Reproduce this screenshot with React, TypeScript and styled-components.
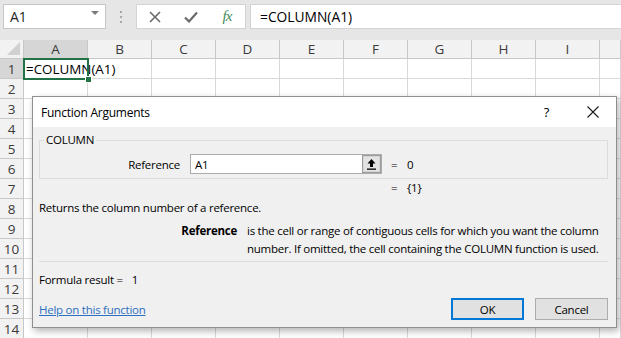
import React from 'react';
import styled, { createGlobalStyle } from 'styled-components';

const UI_FONT = `"Open Sans", "Noto Sans", "Liberation Sans", sans-serif`;

const GlobalStyle = createGlobalStyle`
  html, body {
    margin: 0;
    padding: 0;
    background: #ffffff;
    overflow: hidden;
  }
`;

const COLUMNS = ['A', 'B', 'C', 'D', 'E', 'F', 'G', 'H', 'I', ''];
const ROWS = [1, 2, 3, 4, 5, 6, 7, 8, 9, 10, 11, 12, 13, 14];

function CancelIcon() {
  return (
    <svg width="12" height="12" viewBox="0 0 12 12">
      <path d="M1 1 L11 11 M11 1 L1 11" stroke="#6a6a6a" strokeWidth="1.6" fill="none" />
    </svg>
  );
}

function EnterIcon() {
  return (
    <svg width="14" height="12" viewBox="0 0 14 12">
      <path d="M1 6.5 L5 10.5 L13 1.5" stroke="#6a6a6a" strokeWidth="2.2" fill="none" />
    </svg>
  );
}

function CloseIcon() {
  return (
    <svg width="12" height="12" viewBox="0 0 12 12">
      <path d="M0.5 0.5 L11.5 11.5 M11.5 0.5 L0.5 11.5" stroke="#1a1a1a" strokeWidth="1.1" fill="none" />
    </svg>
  );
}

function CollapseIcon() {
  return (
    <svg width="11" height="12" viewBox="0 0 11 12">
      <path d="M5.5 1 L1.5 5.5 H4 V9 H7 V5.5 H9.5 Z" fill="#000" />
      <rect x="1" y="10.5" width="9" height="1.3" fill="#000" />
    </svg>
  );
}

export default function App() {
  return (
    <Screen>
      <GlobalStyle />
      <FormulaBar>
        <NameBox>
          <span>A1</span>
          <DropArrow />
        </NameBox>
        <Grip>
          <i /><i /><i />
        </Grip>
        <IconBox>
          <IconSlot><CancelIcon /></IconSlot>
          <IconSlot><EnterIcon /></IconSlot>
          <IconSlot><Fx>fx</Fx></IconSlot>
        </IconBox>
        <FormulaInput>=COLUMN(A1)</FormulaInput>
      </FormulaBar>

      <Sheet>
        <Corner><CornerTriangle /></Corner>
        {COLUMNS.map((c, i) => (
          <ColHeader key={'h' + i} $selected={c === 'A'}>{c}</ColHeader>
        ))}
        {ROWS.map((r) => (
          <React.Fragment key={r}>
            <RowHeader $selected={r === 1}>{r}</RowHeader>
            {COLUMNS.map((c, i) => (
              r === 1 && i === 0
                ? <ActiveCell key={c + r}>=COLUMN(A1)<FillHandle /></ActiveCell>
                : <Cell key={'c' + i + '-' + r} />
            ))}
          </React.Fragment>
        ))}
      </Sheet>

      <Dialog>
        <TitleBar>
          <Title>Function Arguments</Title>
          <TitleButtons>
            <Help>?</Help>
            <CloseIcon />
          </TitleButtons>
        </TitleBar>
        <Body>
          <Group>
            <Legend>COLUMN</Legend>
            <ArgRow>
              <ArgLabel>Reference</ArgLabel>
              <RefInput>
                <span>A1</span>
                <CollapseButton><CollapseIcon /></CollapseButton>
              </RefInput>
              <Equals>=</Equals>
              <Value>0</Value>
            </ArgRow>
          </Group>
          <ResultRow>
            <Equals>=</Equals>
            <Value>{'{1}'}</Value>
          </ResultRow>
          <Summary>Returns the column number of a reference.</Summary>
          <ArgHelp>
            <ArgHelpName>Reference</ArgHelpName>
            <ArgHelpText>
              <span>is the cell or range of contiguous cells for which you want the column</span>
              <span>number. If omitted, the cell containing the COLUMN function is used.</span>
            </ArgHelpText>
          </ArgHelp>
          <Separator />
          <FormulaResult>
            <span>Formula result =</span>
            <span>1</span>
          </FormulaResult>
          <Footer>
            <HelpLink href="#">Help on this function</HelpLink>
            <Buttons>
              <DialogButton $primary>OK</DialogButton>
              <DialogButton>Cancel</DialogButton>
            </Buttons>
          </Footer>
        </Body>
      </Dialog>
    </Screen>
  );
}

const Screen = styled.div`
  position: relative;
  width: 621px;
  height: 338px;
  overflow: hidden;
  background: #ffffff;
  font-family: ${UI_FONT};
`;

const FormulaBar = styled.div`
  height: 40px;
  box-sizing: border-box;
  padding: 4px 0 0 3px;
  background: #e6e6e6;
  display: flex;
  align-items: flex-start;
`;

const NameBox = styled.div`
  width: 103px;
  height: 25px;
  box-sizing: border-box;
  background: #ffffff;
  border: 1px solid #c6c6c6;
  display: flex;
  align-items: center;
  justify-content: space-between;
  padding: 0 6px 0 6px;
  font-size: 14px;
  color: #262626;
`;

const DropArrow = styled.span`
  width: 0;
  height: 0;
  border-left: 4px solid transparent;
  border-right: 4px solid transparent;
  border-top: 4px solid #7a7a7a;
  margin-top: -8px;
`;

const Grip = styled.div`
  width: 30px;
  height: 25px;
  display: flex;
  flex-direction: column;
  align-items: center;
  justify-content: center;
  gap: 3px;

  i {
    width: 2px;
    height: 2px;
    background: #a8a8a8;
  }
`;

const IconBox = styled.div`
  width: 110px;
  height: 25px;
  box-sizing: border-box;
  background: #ffffff;
  border: 1px solid #d4d4d4;
  display: flex;
`;

const IconSlot = styled.div`
  width: 36px;
  display: flex;
  align-items: center;
  justify-content: center;
`;

const Fx = styled.span`
  font-family: "Liberation Serif", "DejaVu Serif", serif;
  font-style: italic;
  font-size: 15px;
  color: #3f8a5e;
  letter-spacing: -1px;
`;

const FormulaInput = styled.div`
  flex: 1;
  height: 25px;
  box-sizing: border-box;
  margin-left: 4px;
  background: #ffffff;
  border: 1px solid #d4d4d4;
  border-right: none;
  padding-left: 9px;
  display: flex;
  align-items: center;
  font-size: 13.8px;
  color: #000000;
`;

const Sheet = styled.div`
  display: grid;
  grid-template-columns: 24px repeat(9, 64px) 1fr;
  grid-template-rows: 19px;
  grid-auto-rows: 20px;
  font-size: 13.5px;
`;

const Corner = styled.div`
  background: #f2f2f2;
  border-right: 1px solid #c8c8c8;
  border-bottom: 1px solid #c8c8c8;
  box-sizing: border-box;
  display: flex;
  align-items: flex-end;
  justify-content: flex-end;
  padding: 0 3px 3px 0;
`;

const CornerTriangle = styled.span`
  width: 0;
  height: 0;
  border-left: 13px solid transparent;
  border-bottom: 13px solid #d0d0d0;
`;

const ColHeader = styled.div<{ $selected?: boolean }>`
  box-sizing: border-box;
  background: ${(p) => (p.$selected ? '#d6d6d6' : '#f2f2f2')};
  border-right: 1px solid #c8c8c8;
  border-bottom: 1px solid #c8c8c8;
  display: flex;
  align-items: center;
  justify-content: center;
  color: #3a3a3a;
`;

const RowHeader = styled.div<{ $selected?: boolean }>`
  box-sizing: border-box;
  background: ${(p) => (p.$selected ? '#d6d6d6' : '#f2f2f2')};
  border-right: 1px solid #c8c8c8;
  border-bottom: 1px solid #c8c8c8;
  display: flex;
  align-items: center;
  justify-content: center;
  color: #3a3a3a;
`;

const Cell = styled.div`
  box-sizing: border-box;
  border-right: 1px solid #d9d9d9;
  border-bottom: 1px solid #d9d9d9;
`;

const ActiveCell = styled.div`
  position: relative;
  z-index: 1;
  box-sizing: border-box;
  padding-left: 2px;
  display: flex;
  align-items: center;
  white-space: nowrap;
  font-size: 13.4px;
  color: #000000;
  outline: 2px solid #217346;
  outline-offset: -1px;
`;

const FillHandle = styled.span`
  position: absolute;
  right: -4px;
  bottom: -4px;
  width: 5px;
  height: 5px;
  background: #217346;
  border: 1px solid #ffffff;
`;

const Dialog = styled.div`
  position: absolute;
  left: 32px;
  top: 96px;
  width: 585px;
  height: 232px;
  box-sizing: border-box;
  z-index: 2;
  border: 1px solid #8f8f8f;
  background: #f0f0f0;
  box-shadow: 2px 3px 7px rgba(0, 0, 0, 0.3);
  display: flex;
  flex-direction: column;
  font-size: 11.5px;
  letter-spacing: -0.25px;
  color: #000000;
`;

const TitleBar = styled.div`
  height: 30px;
  flex-shrink: 0;
  background: #ffffff;
  display: flex;
  align-items: center;
  justify-content: space-between;
  padding: 0 17px 0 8px;
`;

const Title = styled.span`
  font-size: 12px;
`;

const TitleButtons = styled.div`
  display: flex;
  align-items: center;
  gap: 38px;
`;

const Help = styled.span`
  font-size: 13px;
`;

const Body = styled.div`
  display: flex;
  flex-direction: column;
  padding: 0 8px 0 6px;
`;

const Group = styled.fieldset`
  margin: 5px 0 0 0;
  padding: 0 0 4px 0;
  border: 1px solid #dcdcdc;
  min-width: 0;
`;

const Legend = styled.legend`
  margin-left: 4px;
  padding: 0 2px;
  line-height: 16px;
`;

const ArgRow = styled.div`
  display: flex;
  align-items: center;
  margin-top: 6px;
  height: 20px;
`;

const ArgLabel = styled.span`
  width: 140px;
  text-align: right;
  margin-right: 10px;
`;

const RefInput = styled.div`
  width: 192px;
  height: 20px;
  box-sizing: border-box;
  background: #ffffff;
  border: 1px solid #acacac;
  display: flex;
  align-items: center;
  justify-content: space-between;
  padding-left: 4px;
`;

const CollapseButton = styled.span`
  width: 19px;
  height: 18px;
  box-sizing: border-box;
  background: #e3e3e3;
  border: 1px solid #9c9c9c;
  box-shadow: inset 0 0 0 1px #d6d6d6;
  display: flex;
  align-items: center;
  justify-content: center;
`;

const Equals = styled.span`
  margin-left: 9px;
  width: 16px;
`;

const Value = styled.span``;

const ResultRow = styled.div`
  display: flex;
  padding-left: 343px;
  margin-top: 1px;
  line-height: 16px;
`;

const Summary = styled.div`
  margin-top: 4px;
  line-height: 16px;
`;

const ArgHelp = styled.div`
  display: flex;
  margin-top: 6px;
  line-height: 18px;
`;

const ArgHelpName = styled.span`
  flex-shrink: 0;
  width: 198px;
  text-align: right;
  font-weight: 700;
  margin-right: 10px;
`;

const ArgHelpText = styled.div`
  display: flex;
  flex-direction: column;
  white-space: nowrap;
`;

const Separator = styled.div`
  height: 1px;
  background: #dcdcdc;
  margin-top: 3px;
`;

const FormulaResult = styled.div`
  display: flex;
  gap: 9px;
  margin-top: 10px;
  line-height: 16px;
`;

const Footer = styled.div`
  display: flex;
  align-items: center;
  justify-content: space-between;
  margin-top: 10px;
`;

const HelpLink = styled.a`
  color: #2d6fc0;
  text-decoration: underline;
`;

const Buttons = styled.div`
  display: flex;
  gap: 11px;
`;

const DialogButton = styled.button<{ $primary?: boolean }>`
  width: 73px;
  height: 22px;
  box-sizing: border-box;
  font-family: ${UI_FONT};
  font-size: 11.5px;
  letter-spacing: -0.25px;
  color: #000000;
  background: #e1e1e1;
  border: ${(p) => (p.$primary ? '2px solid #0078d7' : '1px solid #adadad')};
  padding: 0;
`;
